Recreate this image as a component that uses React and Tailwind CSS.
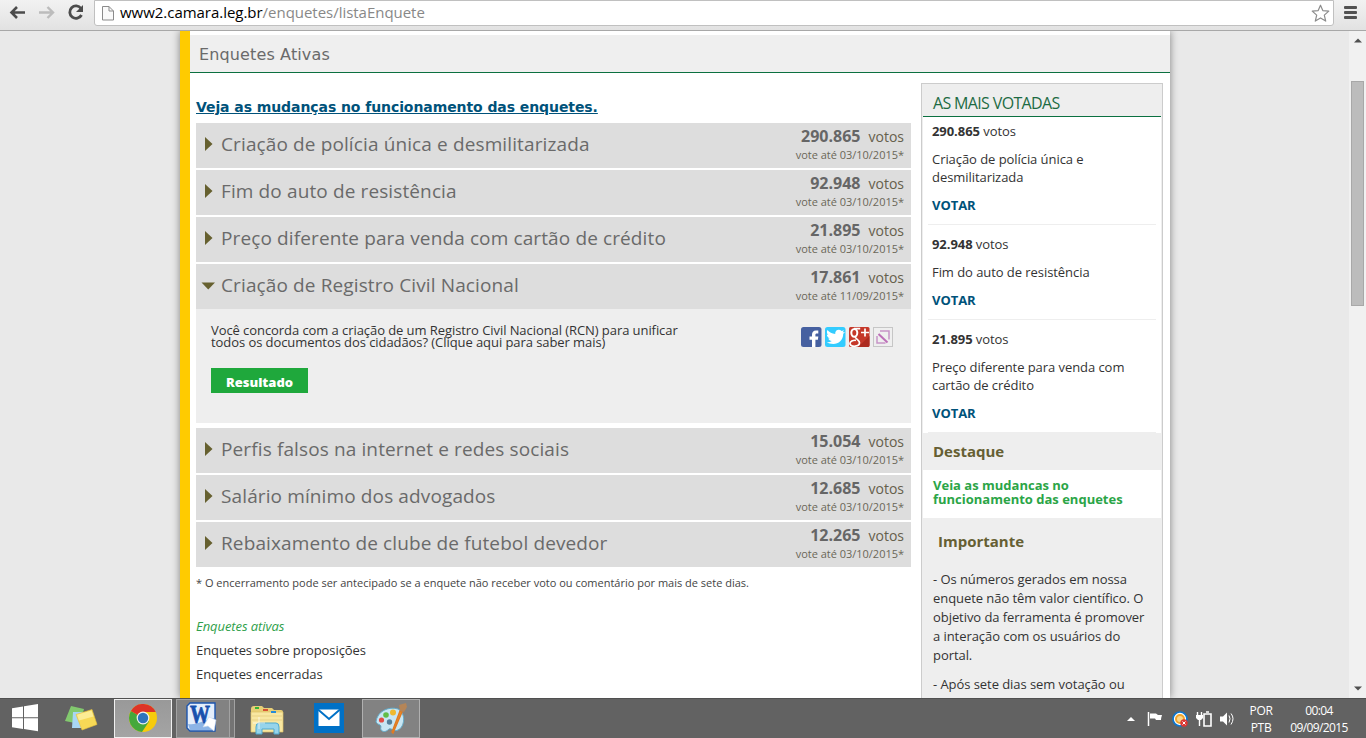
import React from 'react'

const polls = [
  { title: 'Criação de polícia única e desmilitarizada', votes: '290.865', until: '03/10/2015' },
  { title: 'Fim do auto de resistência', votes: '92.948', until: '03/10/2015' },
  { title: 'Preço diferente para venda com cartão de crédito', votes: '21.895', until: '03/10/2015' },
  { title: 'Criação de Registro Civil Nacional', votes: '17.861', until: '11/09/2015', open: true },
  { title: 'Perfis falsos na internet e redes sociais', votes: '15.054', until: '03/10/2015' },
  { title: 'Salário mínimo dos advogados', votes: '12.685', until: '03/10/2015' },
  { title: 'Rebaixamento de clube de futebol devedor', votes: '12.265', until: '03/10/2015' },
]

const BrowserBar = () => (
  <header className="flex h-[31px] shrink-0 items-start border-b border-[#a8a8a8] bg-linear-to-b from-[#f2f2f2] to-[#e2e2e2]">
    <svg width="94" height="26" viewBox="0 0 94 26" fill="none" className="shrink-0">
      <path d="M25 12.500H12M17 7l-5.500 5.500L17 18" stroke="#4c4c4c" strokeWidth="2.600" />
      <path d="M39 12.500h13M47.500 7l5.500 5.500-5.500 5.500" stroke="#bcbcbc" strokeWidth="2.400" />
      <path d="M81 8.500A6.200 6.200 0 1 0 81.500 15" stroke="#4c4c4c" strokeWidth="2.800" />
      <path d="M83 5v7h-7z" fill="#4c4c4c" />
    </svg>
    <div className="flex h-[26px] w-[1240px] items-center rounded-b-[3px] border border-[#c0c0c0] bg-white pl-[7px] pr-[3px]">
      <svg width="12" height="16" viewBox="0 0 12 16" fill="#fafafa" stroke="#8b8b8b" className="mr-[6px] shrink-0">
        <path d="M.5 1.500h6.500l4.500 4.500v9H.5z" />
        <path d="M7 1.500V6h4.500" fill="none" />
      </svg>
      <span className="grow whitespace-nowrap pb-[2px] font-['Open_Sans',sans-serif] text-[15px] leading-[22px] tracking-[-0.03px] text-[#888]">
        <span className="text-black">www2.camara.leg.br</span>/enquetes/listaEnquete
      </span>
      <svg width="19" height="19" viewBox="0 0 19 19" fill="white" stroke="#8c8c8c" strokeWidth="1.200" strokeLinejoin="round">
        <path d="M9.500 1.200l2.300 5.400 6 .5-4.500 4 1.400 6-5.200-3.200-5.200 3.200 1.400-6-4.500-4 6-.5z" />
      </svg>
    </div>
    <div className="ml-[10px] mt-[6px] flex flex-col gap-[2px]">
      <div className="h-[3px] w-[13px] rounded-[1px] bg-[#525252]" />
      <div className="h-[3px] w-[13px] rounded-[1px] bg-[#525252]" />
      <div className="h-[3px] w-[13px] rounded-[1px] bg-[#525252]" />
    </div>
  </header>
)

const ShareIcons = () => (
  <div className="flex gap-[3px]">
    <svg width="21" height="21" viewBox="0 0 21 21">
      <rect width="20.500" height="20" rx="2.500" fill="#4660a0" />
      <path d="M11 20v-7.200H8.500V9.500H11V7.800C11 5 12.300 3.400 15 3.400h2.300v3.200h-1.500c-1.100 0-1.400.5-1.400 1.500v1.400h2.900l-.4 3.300h-2.500V20z" fill="#fff" />
    </svg>
    <svg width="21" height="21" viewBox="0 0 21 21">
      <rect width="20.500" height="20" rx="2.500" fill="#33ccff" />
      <path d="M20 5.200l-1.800 1.500C18.300 13 13.500 17 8.300 17c-2.600 0-4.700-.5-6.500-1.700 2 .1 3.700-.3 5-1.300-1.700-.1-3-1.100-3.500-2.600h1.500C3 10.700 1.800 9.300 1.900 7.500l1.500.5C1.800 6.700 1.500 4.700 2.400 3c2 2.300 4.500 3.700 7.800 3.900C9.800 2.900 14.200 1.500 16.600 4l2.400-.8-1.300 2z" fill="#fff" />
    </svg>
    <svg width="21" height="21" viewBox="0 0 21 21" fill="none" stroke="#fff">
      <rect width="20.500" height="20" rx="1.500" fill="#c5382a" stroke="none" />
      <path d="M9 20L20.500 9v9a2 2 0 0 1-2 2z" fill="#ac2b20" stroke="none" />
      <ellipse cx="5.300" cy="5.800" rx="3" ry="3.900" strokeWidth="2" />
      <path d="M5 1.600h6.200M6.500 9.800c-.8 1.800 4 2.800 4 6 0 4.300-8.500 4.400-9.500 1.200-.3-2.700 3-4 6-3.700" strokeWidth="1.700" />
      <path d="M16 1.500v8M12 5.500h8" strokeWidth="1.700" />
    </svg>
    <svg width="21" height="21" viewBox="0 0 21 21" fill="none">
      <rect x=".5" y=".5" width="19" height="19" fill="#efefef" stroke="#c6c6c6" />
      <path d="M7 4h9v8.500M4 9v7h8.500" stroke="#c795c7" strokeWidth="1.500" />
      <path d="M5.500 7l9 8.500" stroke="#bd6fb8" strokeWidth="2" />
    </svg>
  </div>
)

const PollRow = ({ poll }) => (
  <li>
    <div className="flex h-[45px] bg-[#ddd]">
      <div className="flex w-[25px] items-center pb-[3px] pl-[5px]">
        {poll.open ? (
          <svg width="14" height="8" viewBox="0 0 14 8" className="mt-[1px]"><path d="M.5 .5h13.500L7.250 7.500z" fill="#66602f" /></svg>
        ) : (
          <svg width="12" height="14" viewBox="0 0 12 14"><path d="M4 0l7.500 7L4 14z" fill="#66602f" /></svg>
        )}
      </div>
      <h3 className="grow whitespace-nowrap text-[19px] leading-[43px] tracking-[0.12px] text-[#6a6a6a]">{poll.title}</h3>
      <div className="pr-[7px] text-right">
        <div className="flex h-[25px] items-baseline justify-end gap-[8px] leading-[27px] text-[#666]">
          <span className="text-[16px] font-bold">{poll.votes}</span>
          <span className="text-[14px] text-[#66604c]">votos</span>
        </div>
        <div className="text-[11px] leading-[13px] tracking-[-0.02px] text-[#6b6758]">vote até {poll.until}*</div>
      </div>
    </div>
    {poll.open && (
      <div className="mb-[3px] flex h-[114px] justify-between bg-[#eee] pl-[15px] pr-[17px] pt-[15px]">
        <div>
          <p className="whitespace-nowrap text-[13px] leading-3 tracking-[-0.07px] text-[#333]">
            Você concorda com a criação de um Registro Civil Nacional (RCN) para unificar
            <br />
            todos os documentos dos cidadãos? (Clique aqui para saber mais)
          </p>
          <button className="mt-5 h-[25px] w-[97px] bg-[#1fa83c] pt-[3px] text-[13px] font-extrabold leading-[22px] text-white">
            Resultado
          </button>
        </div>
        <div className="pt-[3px]">
          <ShareIcons />
        </div>
      </div>
    )}
  </li>
)

const MostVoted = ({ poll, first }) => (
  <div className={first ? 'mx-[5px] border-b border-[#eee] pb-[10px] pl-[4px] pt-[5px]' : 'mx-[5px] border-b border-[#eee] pb-[10px] pl-[4px] pt-[10px]'}>
    <p><b>{poll.votes}</b> votos</p>
    <p className="my-[10px] w-[200px]">{poll.title}</p>
    <p className="font-bold text-[#00527a]">VOTAR</p>
  </div>
)

const Sidebar = () => (
  <aside className="mt-[10px] h-[660px] w-[242px] shrink-0 border border-[#ccc] bg-[#eee] px-px text-[13px] leading-[18px] tracking-[-0.06px] text-[#333]">
    <h2 className="h-[33px] border-b border-[#0b7040] pl-[10px] text-[16px] leading-[38px] tracking-[-0.65px] text-[#1d6b43]">
      AS MAIS VOTADAS
    </h2>
    <div className="bg-white">
      {polls.slice(0, 3).map((poll, i) => (
        <MostVoted key={poll.title} poll={poll} first={i === 0} />
      ))}
    </div>
    <h4 className="h-[37px] pl-[10px] text-[15px] font-bold leading-[37px] tracking-normal text-[#665f33]">Destaque</h4>
    <div className="h-12 bg-white pl-[10px] pt-[8px] font-bold leading-[14px] tracking-normal text-[#2ba547]">
      Veia as mudancas no
      <br />
      funcionamento das enquetes
    </div>
    <h4 className="pl-[15px] pt-[13px] text-[15px] font-bold leading-[20px] tracking-normal text-[#665f33]">Importante</h4>
    <div className="whitespace-nowrap pl-[10px] pt-[19px] leading-[19px]">
      <p>
        - Os números gerados em nossa<br />
        enquete não têm valor científico. O<br />
        objetivo da ferramenta é promover<br />
        a interação com os usuários do<br />
        portal.
      </p>
      <p className="mt-[10px]">- Após sete dias sem votação ou</p>
    </div>
  </aside>
)

const ScrollBar = () => (
  <div className="flex w-[17px] shrink-0 flex-col items-center bg-[#f1f1f1] py-[7px]">
    <svg width="8" height="5" viewBox="0 0 8 5"><path d="M0 4.500L4 .5l4 4z" fill="#505050" /></svg>
    <div className="mt-[38px] h-[225px] w-[13px] border border-[#a8a8a8] bg-[#bcbcbc]" />
    <div className="grow" />
    <svg width="8" height="5" viewBox="0 0 8 5"><path d="M0 .5h8l-4 4z" fill="#505050" /></svg>
  </div>
)

const TaskBar = () => (
  <footer className="flex h-10 shrink-0 items-center border-t border-[#505050] bg-[#626262] font-['Open_Sans',sans-serif] text-white">
    <svg width="50" height="38" viewBox="0 0 50 38" fill="#fff" className="-mt-[2px] shrink-0">
      <path d="M12 9.200l11-1.700v10.700H12zM24 7.300L38 5v13.200H24zM12 19.200h11V30l-11-1.800zM24 19.200h14v13L24 30.100z" />
    </svg>
    <svg width="64" height="38" viewBox="0 0 64 38" className="shrink-0">
      <path d="M21 6l13 3-4 15-15-3z" fill="#82c96e" />
      <path d="M23 12h13l1 16H22z" fill="#a9d6f5" />
      <path d="M26 14.500l16-5 5 15-15 5.500z" fill="#f7d956" stroke="#e9c23d" strokeWidth=".6" />
      <path d="M27 14.800l14.500-4.400 2 6-14.500 4z" fill="#fcec94" />
    </svg>
    <div className="flex h-[39px] w-[58px] shrink-0 items-center justify-center border border-[#f0f0f0] bg-linear-to-b from-[#999] to-[#a4a4a4] pb-[2px]">
      <svg width="28" height="28" viewBox="0 0 28 28">
        <circle cx="14" cy="14" r="14" fill="#f6cb0c" />
        <path d="M14 14L1.900 7A14 14 0 0 0 13 28l7-10.500z" fill="#45a83c" />
        <path d="M14 14L1.900 7A14 14 0 0 1 26.700 8H14z" fill="#de3427" />
        <circle cx="14" cy="14" r="6.400" fill="#f1f1f1" />
        <circle cx="14" cy="14" r="5.200" fill="#2f74bd" />
      </svg>
    </div>
    <div className="ml-1 flex h-[39px] w-[54px] shrink-0 items-center border border-[#a2a2a2] bg-[#828282] pb-[4px] pl-[9px]">
      <svg width="31" height="30" viewBox="0 0 31 30">
        <path d="M4 1h25v28H4l-3-3V4z" fill="#e4eefb" stroke="#1d56ae" strokeWidth="1.400" />
        <path d="M2 22C10 24 20 17 28 16v12H4z" fill="#8cb4e6" />
        <text x="4" y="21" textLength="20" lengthAdjust="spacingAndGlyphs" fontFamily="Liberation Serif" fontWeight="bold" fontSize="25" fill="#1750ad" stroke="#1750ad" strokeWidth=".8">W</text>
        <path d="M23 15l7 3-2 11-6-5-5 1z" fill="#fff" stroke="#cbd9eb" strokeWidth=".6" />
      </svg>
    </div>
    <div className="h-[39px] w-[5px] shrink-0 border border-l-0 border-[#a2a2a2] bg-[#747474]" />
    <svg width="79" height="38" viewBox="0 0 79 38" className="shrink-0">
      <path d="M16 9q0-3 3-3h8l2 2h8l2 2h7q2 0 2 2v18H16z" fill="#e8cf76" />
      <path d="M16 12h32v20H16z" fill="#f8e7a1" stroke="#dcc066" strokeWidth=".7" />
      <path d="M20 8h4" stroke="#36b336" strokeWidth="2" />
      <path d="M28 10h5" stroke="#d75332" strokeWidth="2" />
      <path d="M36 12h5" stroke="#278bd8" strokeWidth="2" />
      <path d="M17 16h30M17 20h30" stroke="#e9d184" />
      <path d="M21 34v-7q0-4 3-4h17q3 0 3 4v7h-5v-5H27v5z" fill="#96d4eb" stroke="#4fa9cf" />
      <path d="M24 17v12M18 23h12" stroke="#fff" opacity=".7" />
    </svg>
    <svg width="30" height="30" viewBox="0 0 30 30" className="-mt-[2px] shrink-0">
      <path d="M0 0h30v30H0z" fill="#0071c7" />
      <path d="M4.500 6.500h21V23h-21z" fill="#fff" />
      <path d="M4 6.500l11 9.500 11-9.500" fill="none" stroke="#0071c7" strokeWidth="2" />
    </svg>
    <div className="ml-[18px] flex h-[39px] w-[58px] shrink-0 items-center justify-center border border-[#b0b0b0] bg-[#828282] pb-[2px]">
      <svg width="34" height="32" viewBox="0 0 34 32">
        <path d="M2 20C3 9 15 4 24 7c8 4 7 18 0 21-4 2-6-2-9-1-2 2-5 4-8 1-1-2 1-4-1-5q-3-1-4-3z" fill="#c8e6f3" stroke="#65abc9" />
        <circle cx="7.500" cy="18" r="2.600" fill="#e34d45" />
        <circle cx="12" cy="13" r="2.800" fill="#62bd47" />
        <circle cx="19" cy="10.500" r="3" fill="#efb92e" />
        <circle cx="15.500" cy="20" r="2.700" fill="#55819c" />
        <path d="M26 9l2 1-9 21-1-1z" fill="#ed8e30" stroke="#df7b22" strokeWidth="1.400" />
        <path d="M26 9l-1-6 7-2 1 4-3 5z" fill="#b48558" />
      </svg>
    </div>
    <svg width="114" height="24" viewBox="0 0 114 24" fill="none" className="ml-auto mr-[9px] shrink-0">
      <path d="M5 14l4-4 4 4z" fill="#fff" />
      <path d="M26.500 5v14" stroke="#fff" strokeWidth="1.500" />
      <path d="M28 6.500h6l2 1.500h4q-1 3-1 5h-5l-1-1.500h-5z" fill="#fff" />
      <circle cx="58" cy="12" r="7" fill="#fff" stroke="#0d75cc" strokeWidth="1.700" />
      <circle cx="58" cy="12" r="4" fill="#fcd68b" stroke="#f1a52c" strokeWidth="2" />
      <circle cx="62" cy="16" r="3.700" fill="#db3634" />
      <path d="M60.500 14.500l3 3m0-3l-3 3" stroke="#fff" />
      <path d="M75.500 5v3m4-3v3M77.500 12v7" stroke="#fff" strokeWidth="1.400" />
      <path d="M74 8h7v3l-2 2h-3l-2-2z" fill="#fff" />
      <path d="M82 7h7v12h-7zM84 5h3" stroke="#fff" strokeWidth="1.600" />
      <path d="M98 9.500h3l4-4v13l-4-4h-3z" fill="#fff" />
      <path d="M107 8.500q2 3 0 7m2-9q4 5 0 11" stroke="#fff" />
    </svg>
    <div className="w-[32px] text-center text-[12px] leading-[17px] tracking-[-0.3px]">
      POR<br />PTB
    </div>
    <div className="ml-[9px] mr-[14px] w-[66px] whitespace-nowrap text-center text-[12px] leading-[17px] tracking-[-0.6px]">
      00:04<br />09/09/2015
    </div>
  </footer>
)

const App = () => (
  <div className="flex h-[738px] w-[1366px] flex-col overflow-hidden">
    <BrowserBar />
    <div className="flex min-h-0 grow overflow-hidden bg-[#e9e9e9] font-['Open_Sans',sans-serif]">
      <div className="ml-[180px] w-[990px] shrink-0 border-l-[10px] border-[#ffcb00] bg-white pt-1 shadow-[0_0_8px_rgba(0,0,0,0.45)]">
        <h1 className="h-[38px] border-b border-[#0b7040] bg-[#efefef] pl-[9px] font-['DejaVu_Sans',sans-serif] text-[16px] leading-[39px] tracking-[0.13px] text-[#6a6a6a]">
          Enquetes Ativas
        </h1>
        <div className="flex gap-[10px] pl-[6px]">
          <main className="w-[715px] pt-[24px]">
            <a className="block h-[26px] whitespace-nowrap font-['DejaVu_Sans',sans-serif] text-[14px] font-bold leading-5 tracking-[-0.08px] text-[#00527a] underline">
              Veja as mudanças no funcionamento das enquetes.
            </a>
            <ul className="flex flex-col gap-[2px]">
              {polls.map((poll) => (
                <PollRow key={poll.title} poll={poll} />
              ))}
            </ul>
            <p className="mt-[8px] text-[11px] leading-4 text-[#444]">
              * O encerramento pode ser antecipado se a enquete não receber voto ou comentário por mais de sete dias.
            </p>
            <nav className="mt-[23px] flex flex-col text-[13px] leading-6 tracking-[-0.07px] text-[#333]">
              <a className="italic text-[#2f9f4b]">Enquetes ativas</a>
              <a>Enquetes sobre proposições</a>
              <a>Enquetes encerradas</a>
            </nav>
          </main>
          <Sidebar />
        </div>
      </div>
      <div className="grow" />
      <ScrollBar />
    </div>
    <TaskBar />
  </div>
)

export default App
